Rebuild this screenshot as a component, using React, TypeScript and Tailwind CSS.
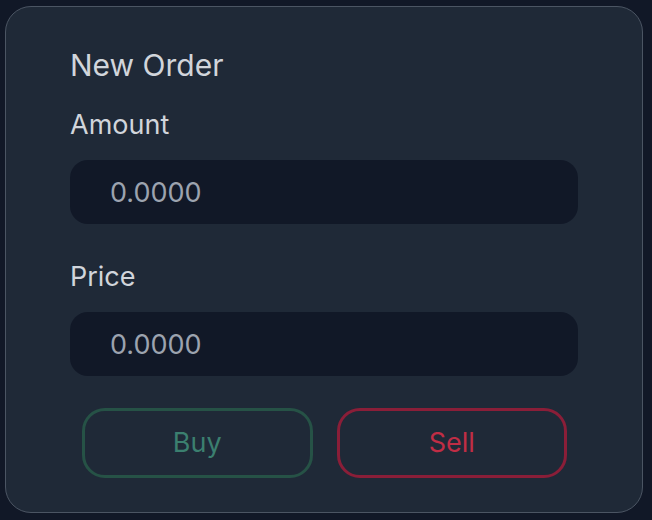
import React from "react";

const OrderField = ({ label }: { label: string }) => {
  return (
    <div className="flex flex-col">
      <label className="text-[27px] leading-[34px] text-[#d1d5db]">{label}</label>
      <input
        type="text"
        placeholder="0.0000"
        className="mt-[18px] h-[64px] w-full rounded-[18px] bg-[#111827] px-10 text-[27px] text-[#9ca3af] placeholder:text-[#9ca3af] outline-none"
      />
    </div>
  );
};

const App = () => {
  return (
    <div
      className="min-h-[520px] w-[652px] bg-[#111827] pl-[5px] pr-[9px] pt-[6px] pb-[7px]"
      style={{ fontFamily: "Inter, 'Noto Sans', sans-serif" }}
    >
      <div className="flex h-[507px] flex-col rounded-[26px] border-[1.5px] border-[#4b5563] bg-[#1f2937] px-[64px] pt-[38px]">
        {/* Header */}
        <h2 className="text-[30px] leading-[40px] text-[#d1d5db]">New Order</h2>

        <div className="mt-[23px] flex flex-col gap-[36px]">
          <OrderField label="Amount" />
          <OrderField label="Price" />
        </div>

        {/* Actions */}
        <div className="mt-[32px] flex gap-6 pl-3 pr-[11px]">
          <button className="h-[70px] flex-1 rounded-[23px] border-[3px] border-[#265246] text-[27px] text-[#3b7f6f]">
            Buy
          </button>
          <button className="h-[70px] flex-1 rounded-[23px] border-[3px] border-[#8a1e38] text-[27px] text-[#c02d45]">
            Sell
          </button>
        </div>
      </div>
    </div>
  );
};

export default App;
